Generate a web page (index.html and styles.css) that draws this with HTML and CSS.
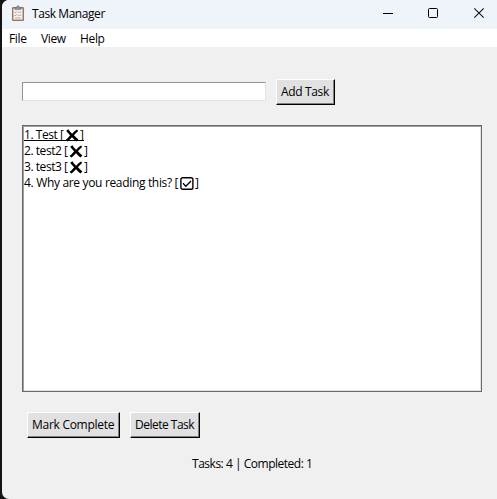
FILE: index.html
```html
<!DOCTYPE html>
<html lang="en">
<head>
<meta charset="utf-8">
<title>Task Manager</title>
<link rel="stylesheet" href="styles.css">
</head>
<body>
<svg class="symbols" width="0" height="0" aria-hidden="true">
  <symbol id="cross" viewBox="0 0 14 13"><path d="M1.2 1.8 3.4.3Q5.2 3.4 7.2 4.8 9.4 2 12 .5L13.2 2Q10.8 3.8 9 6.3 11 8.7 13.4 10.4L11.5 12.5Q9 10.7 7 8.2 4.8 10.7 2.4 12.6L.6 11Q3.3 9 5.1 6.3 3 4.3 1.2 1.8Z"/></symbol>
  <symbol id="check" viewBox="0 0 14 13"><rect x=".9" y=".7" width="12" height="11.6" rx="1.8" fill="none" stroke="#000" stroke-width="1.4"/><path d="m3 6.3 2.8 2.9 5.2-5.2" fill="none" stroke="#000" stroke-width="1.3"/></symbol>
</svg>
<div class="window">
  <header class="titlebar">
    <svg class="app-icon" width="14" height="17" viewBox="0 0 14 17">
      <rect x="1" y="2" width="12" height="14" rx="1.2" fill="#9a745c"/>
      <rect x="2.4" y="3.6" width="9.2" height="11" fill="#f4f2f1"/>
      <path d="M4 4.4V2.6h1.6Q5.7.7 7 .7t1.4 1.9H10v1.8z" fill="#969899" stroke="#686462" stroke-width=".6"/>
      <path d="m3.5 7 .8.8 1.3-1.6m-2.1 4 .8.8 1.3-1.6" fill="none" stroke="#b56461" stroke-width=".7"/>
      <path d="M6.5 7.2h4M6.5 10.2h4M4 13h5.8" stroke="#a7a9a9" stroke-width=".9"/>
    </svg>
    <span class="title">Task Manager</span>
    <div class="controls">
      <svg width="45" height="28" viewBox="0 0 45 28"><path d="M16 13.5h10" stroke="#000"/></svg>
      <svg width="45" height="28" viewBox="0 0 45 28"><rect x="16.5" y="8.5" width="9" height="9" rx="1" fill="none" stroke="#000"/></svg>
      <svg width="45" height="28" viewBox="0 0 45 28"><path d="m17.3 8.3 9.4 9.4m0-9.4-9.4 9.4" fill="none" stroke="#111" stroke-width="1.1"/></svg>
    </div>
  </header>
  <nav class="menubar"><span class="file">File</span><span class="view">View</span><span class="help">Help</span></nav>
  <main>
    <form class="entry-row"><input class="entry" type="text" aria-label="Task"><button class="button add" type="button"><span>Add Task</span></button></form>
    <div class="list">
      <div class="task active"><span class="label test">1. Test [</span><svg class="mark" width="14" height="13"><use href="#cross"/></svg><span>]</span></div>
      <div class="task"><span class="label short">2. test2 [</span><svg class="mark" width="14" height="13"><use href="#cross"/></svg><span>]</span></div>
      <div class="task"><span class="label short">3. test3 [</span><svg class="mark" width="14" height="13"><use href="#cross"/></svg><span>]</span></div>
      <div class="task"><span class="label why">4. Why are you reading this? [</span><svg class="mark" width="14" height="13"><use href="#check"/></svg><span>]</span></div>
    </div>
    <div class="actions"><button class="button complete" type="button"><span>Mark Complete</span></button><button class="button delete" type="button"><span>Delete Task</span></button></div>
    <footer class="status">Tasks: 4 | Completed: 1</footer>
  </main>
</div>
</body>
</html>
```
FILE: styles.css
```css
* { box-sizing: border-box; }
body {
  margin: 0;
  background: #141416;
  color: #000;
  font: 12px/16px "Open Sans", "Noto Sans", sans-serif;
  letter-spacing: -0.35px;
  overflow: hidden;
}
.symbols { display: none; }
.window {
  width: 495px;
  height: 499px;
  margin-left: 2px;
  background: #f0f0f0;
  border-radius: 7px 0 0 7px;
  overflow: hidden;
}
.titlebar {
  display: flex;
  height: 29px;
  padding-left: 9px;
  background: #eff3fa;
}
.app-icon { margin-top: 5px; }
.title { margin: 6px 0 0 7px; letter-spacing: -0.43px; white-space: nowrap; }
.controls { display: flex; margin: 0 -5px 0 auto; }
.menubar {
  display: flex;
  height: 18px;
  padding: 2px 0 0 7px;
  background: #fff;
}
.menubar span { white-space: nowrap; }
.file { width: 32px; }
.view { width: 39px; }
main { padding: 32px 15px 0 20px; }
.entry-row { display: flex; align-items: flex-start; gap: 10px; margin: 0; }
.entry {
  width: 244px;
  height: 19px;
  margin: 3px 0 0;
  padding: 0 2px;
  border: 1px solid;
  border-color: #949494 #e3e3e3 #e3e3e3 #949494;
  border-radius: 0;
  background: #fff;
  outline: 0;
}
.button {
  display: flex;
  justify-content: flex-start;
  height: 26px;
  padding: 4px 0 0 4px;
  border: 1px solid;
  border-color: #fff #000 #000 #fff;
  border-radius: 0;
  background: #e1e1e1;
  box-shadow: inset -1px -1px #808080;
  color: #000;
  font: inherit;
  letter-spacing: inherit;
  white-space: nowrap;
}
.add { width: 59px; }
.complete { width: 93px; letter-spacing: -0.28px; }
.delete { width: 70px; letter-spacing: -0.5px; }
.list {
  width: 460px;
  height: 267px;
  margin-top: 20px;
  padding: 0;
  border: 1px solid #696969;
  background: #fff;
  box-shadow: inset 1px 1px #a0a0a0, inset -1px -1px #e3e3e3;
}
.task {
  display: flex;
  width: max-content;
  height: 16px;
  margin-left: 1px;
  white-space: nowrap;
}
.task:first-child { margin-top: 1px; }
.active { border-bottom: 1px solid #000; height: 14px; margin-bottom: 2px; }
.mark { margin: 2px 1px 0; flex: none; }
.test { width: 40px; letter-spacing: -0.45px; }
.short { width: 44px; letter-spacing: -0.45px; }
.why { width: 155px; letter-spacing: -0.33px; }
.actions { display: flex; gap: 10px; margin: 20px 0 0 5px; }
.status { margin: 18px 0 0 170px; letter-spacing: -0.48px; white-space: nowrap; }
```
